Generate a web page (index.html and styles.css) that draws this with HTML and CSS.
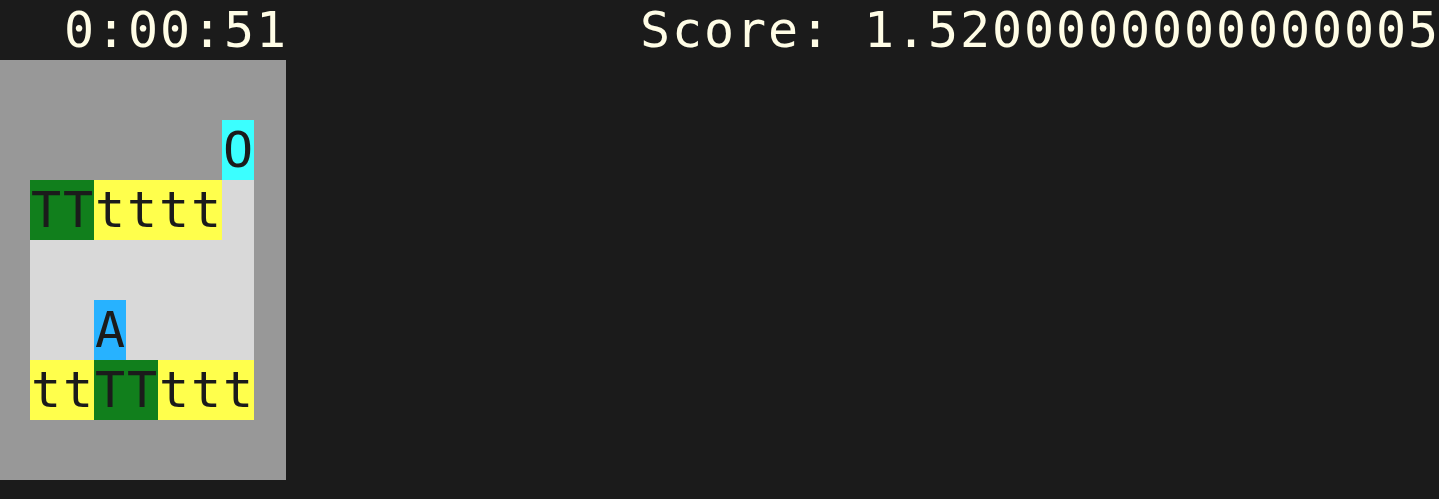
FILE: index.html
```html
<!DOCTYPE html>
<html>
<head>
<meta charset="utf-8">
<link rel="stylesheet" href="styles.css">
</head>
<body>
<div class="status">  0:00:51           Score: 1.5200000000000005</div>
<div class="board">
  <div class="grid">
    <span class="c"></span><span class="c"></span><span class="c"></span><span class="c"></span><span class="c"></span><span class="c"></span><span class="c goal">O</span>
    <span class="c tree">T</span><span class="c tree">T</span><span class="c bush">t</span><span class="c bush">t</span><span class="c bush">t</span><span class="c bush">t</span><span class="c floor"></span>
    <span class="c floor"></span><span class="c floor"></span><span class="c floor"></span><span class="c floor"></span><span class="c floor"></span><span class="c floor"></span><span class="c floor"></span>
    <span class="c floor"></span><span class="c floor"></span><span class="c agent">A</span><span class="c floor"></span><span class="c floor"></span><span class="c floor"></span><span class="c floor"></span>
    <span class="c bush">t</span><span class="c bush">t</span><span class="c tree">T</span><span class="c tree">T</span><span class="c bush">t</span><span class="c bush">t</span><span class="c bush">t</span>
  </div>
</div>
</body>
</html>
```

FILE: styles.css
```css
html, body {
  margin: 0;
  padding: 0;
  background: #1b1b1b;
}
body {
  width: 1439px;
  height: 499px;
  overflow: hidden;
  font-family: "DejaVu Sans Mono", "Liberation Mono", monospace;
  font-size: 50px;
}
.status {
  height: 60px;
  line-height: 60px;
  white-space: pre;
  color: #fffde6;
  letter-spacing: 1.9px;
}
.board {
  width: 286px;
  height: 420px;
  box-sizing: border-box;
  padding: 60px 32px 60px 30px;
  background: #989898;
}
.grid {
  display: grid;
  grid-template-columns: repeat(7, 32px);
  grid-auto-rows: 60px;
}
.c {
  display: flex;
  align-items: center;
  justify-content: center;
  line-height: 60px;
  color: #1b1b1b;
}
.floor { background: #d9d9d9; }
.goal { background: #3bffff; }
.tree { background: #117f1c; }
.bush { background: #ffff4c; }
.agent { background: #27b2ff; }
```
